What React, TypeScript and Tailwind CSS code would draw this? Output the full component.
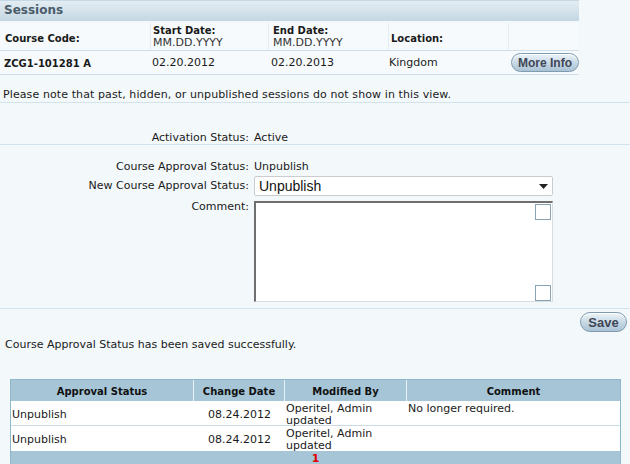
export default function App() {
  const btn =
    "rounded-full border border-[#7f9bb0] bg-gradient-to-b from-[#eef4f8] via-[#c9dae6] to-[#a9c2d4] text-[#3f4656] font-bold font-['Liberation_Sans',Arial,sans-serif] text-[12px] leading-none flex items-center justify-center shadow-[inset_0_1px_0_#ffffff]";
  return (
    <div className="w-[630px] h-[464px] overflow-hidden bg-[#f3f8fa] text-[11px] text-[#1a1a1a] font-['DejaVu_Sans',Verdana,sans-serif]">
      {/* Sessions panel */}
      <div className="w-[579px]">
        <div className="h-[21px] border-t border-[#c6d8e3] bg-gradient-to-b from-[#e3edf3] to-[#c4d7e3] pl-[4px] text-[12px] font-bold leading-[19px] text-[#4b5c6b]">
          Sessions
        </div>
        <div className="mt-[2px] h-[28px] grid grid-cols-[150px_118px_120px_120px_1fr] border-b border-[#cfe0ea] bg-[#f7fafc]">
          <div className="pl-[5px] pt-[3px] flex items-center font-bold text-[10px]">Course Code:</div>
          <div className="pl-[2px] pt-[1px] flex flex-col justify-center leading-[12px] border-l border-[#e2ecf2]">
            <span className="font-bold text-[10px]">Start Date:</span>
            <span className="text-[#333]">MM.DD.YYYY</span>
          </div>
          <div className="pl-[4px] pt-[1px] flex flex-col justify-center leading-[12px] border-l border-[#e2ecf2]">
            <span className="font-bold text-[10px]">End Date:</span>
            <span className="text-[#333]">MM.DD.YYYY</span>
          </div>
          <div className="pl-[2px] pt-[3px] flex items-center font-bold text-[10px] border-l border-[#e2ecf2]">Location:</div>
          <div className="border-l border-[#e2ecf2]" />
        </div>
        <div className="h-[24px] grid grid-cols-[150px_118px_120px_120px_1fr] border-b border-[#cfe0ea] bg-[#f7fafc]">
          <div className="pl-[4px] pt-[2px] flex items-center font-bold text-[10px]">ZCG1-101281 A</div>
          <div className="pl-[2px] pt-[2px] flex items-center">02.20.2012</div>
          <div className="pl-[3px] pt-[2px] flex items-center">02.20.2013</div>
          <div className="pl-[1px] pt-[2px] flex items-center">Kingdom</div>
          <div className="flex items-center justify-end">
            <div className={btn + " w-[68px] h-[19px]"}>More Info</div>
          </div>
        </div>
      </div>
      <div className="h-[28px] flex items-end pl-[3px] leading-[14px] tracking-[0.1px] border-b border-[#d3e3ec]">
        Please note that past, hidden, or unpublished sessions do not show in this view.
      </div>
      <div className="h-[42px] grid grid-cols-[249px_1fr] gap-x-[5px] pt-[29px] border-b border-[#d3e3ec]">
        <div className="text-right leading-[12px]">Activation Status:</div>
        <div className="leading-[12px]">Active</div>
      </div>
      <div className="pt-[14px] h-[164px] border-b border-[#d3e3ec] grid grid-cols-[249px_1fr] gap-x-[5px] content-start">
        <div className="text-right leading-[16px]">Course Approval Status:</div>
        <div className="leading-[16px]">Unpublish</div>
        <div className="text-right leading-[20px] mt-[1px]">New Course Approval Status:</div>
        <div className="mt-[1px] w-[299px] h-[20px] bg-white border border-[#c9cdd2] rounded-[2px] flex items-center justify-between pl-[4px] pr-[4px] text-[14px] font-['Liberation_Sans',Arial,sans-serif] text-[#111]">
          <span>Unpublish</span>
          <svg width="9" height="5" viewBox="0 0 9 5"><path d="M0 0h9L4.5 5z" fill="#222" /></svg>
        </div>
        <div className="text-right mt-[5px] leading-[12px]">Comment:</div>
        <div className="mt-[5px] relative w-[299px] h-[101px] bg-white border border-[#d8dde2] border-t-[2px] border-l-[2px] border-t-[#6f6f6f] border-l-[#6f6f6f]">
          <div className="absolute right-[1px] top-[1px] w-[16px] h-[16px] border border-[#8aa3b2] bg-white" />
          <div className="absolute right-[1px] bottom-[0px] w-[16px] h-[16px] border border-[#8aa3b2] bg-white" />
        </div>
      </div>
      <div className="flex justify-end pr-[3px] pt-[3px]">
        <div className={btn + " w-[47px] h-[20px] text-[13px]"}>Save</div>
      </div>
      <div className="pl-[5px] mt-[6px] leading-[14px]">Course Approval Status has been saved successfully.</div>
      {/* History table */}
      <div className="ml-[10px] mt-[27px] w-[611px] border border-[#8fb7cc] bg-[#a6c6d8]">
        <div className="grid grid-cols-[183px_91px_122px_1fr] h-[21px] font-bold text-[10px] text-[#111]">
          <div className="flex items-center justify-center pt-[1px] border-r border-[#e8f1f6]">Approval Status</div>
          <div className="flex items-center justify-center pt-[1px] border-r border-[#e8f1f6]">Change Date</div>
          <div className="flex items-center justify-center pt-[1px] border-r border-[#e8f1f6]">Modified By</div>
          <div className="flex items-center justify-center pt-[1px]">Comment</div>
        </div>
        {[["No longer required."], [""]].map((c, i) => (
          <div key={i} className={"grid grid-cols-[183px_91px_122px_1fr] h-[25px] bg-white leading-[12px] " + (i === 0 ? "border-b border-[#c9dbe5]" : "")}>
            <div className="pl-[1px] pt-[1px] flex items-center">Unpublish</div>
            <div className="pt-[1px] flex items-center justify-center">08.24.2012</div>
            <div className="pl-[1px] pt-[2px]">Operitel, Admin<br />updated</div>
            <div className="pl-[1px] pt-[2px]">{c[0]}</div>
          </div>
        ))}
        <div className="h-[13px] flex items-center justify-center pt-[1px] text-[#e00000] font-bold leading-none">1</div>
      </div>
    </div>
  );
}
